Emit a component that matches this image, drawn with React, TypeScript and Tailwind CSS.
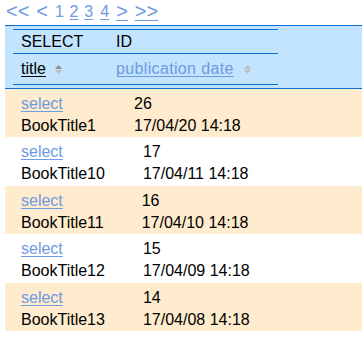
const rows = [
  { id: 26, title: 'BookTitle1', date: '17/04/20 14:18', alt: true, h: 'h-[48px]' },
  { id: 17, title: 'BookTitle10', date: '17/04/11 14:18', alt: false, h: 'h-[49px]' },
  { id: 16, title: 'BookTitle11', date: '17/04/10 14:18', alt: true, h: 'h-[48px]' },
  { id: 15, title: 'BookTitle12', date: '17/04/09 14:18', alt: false, h: 'h-[49px]' },
  { id: 14, title: 'BookTitle13', date: '17/04/08 14:18', alt: true, h: 'h-[48px]' },
]

function SortIcon({ up }: { up: string }) {
  return (
    <svg width="7" height="9" viewBox="0 0 7 9" className="shrink-0">
      <polygon points="3.5,0 7,4 0,4" fill={up} />
      <polygon points="0,5 7,5 3.5,9" fill="#bdbdbd" />
    </svg>
  )
}

const link = 'text-[#6e9ae0] underline decoration-1 underline-offset-[2px]'

export default function App() {
  return (
    <div className="min-h-[363px] bg-white font-['Liberation_Sans',Arial,sans-serif] text-[16px] text-black">
      {/* pager */}
      <div className="flex h-[25px] items-start pl-[6px] pt-[3px] leading-[18px] text-[#6e9ae0]">
        <span className="relative top-[-1px] text-[20px] leading-[18px]">&lt;&lt;</span>
        <span className="relative top-[-1px] ml-[7px] text-[20px] leading-[18px]">&lt;</span>
        <span className="ml-[7px]">1</span>
        <a className={`ml-[5.5px] ${link}`}>2</a>
        <a className={`ml-[6px] ${link}`}>3</a>
        <a className={`ml-[7px] ${link}`}>4</a>
        <a className={`relative top-[-1px] ml-[7px] text-[20px] leading-[18px] ${link}`}>&gt;</a>
        <a className={`relative top-[-1px] ml-[7px] text-[20px] leading-[18px] ${link}`}>&gt;&gt;</a>
      </div>

      {/* header */}
      <div className="ml-[5px] border-y border-[#0b6fd0] bg-[#c2e4ff] px-[8px] py-[3px]">
        <div className="w-[265px] border-t border-[#0b6fd0]">
          <div className="flex h-[24px] items-center border-b border-[#0b6fd0] pl-[8px] leading-[18px]">
            <span className="w-[95px]">SELECT</span>
            <span>ID</span>
          </div>
          <div className="flex h-[31px] items-center border-b border-[#0b6fd0] pl-[8px] leading-[18px]">
            <span className="flex w-[95px] items-center">
              <a className="text-black underline decoration-1 underline-offset-[2px]">title</a>
              <span className="ml-[9px] mt-[1px]">
                <SortIcon up="#8c8c8c" />
              </span>
            </span>
            <span className="flex items-center">
              <a className={`tracking-[0.35px] ${link}`}>publication date</a>
              <span className="ml-[10px] mt-[1px]">
                <SortIcon up="#bdbdbd" />
              </span>
            </span>
          </div>
        </div>
      </div>

      {/* rows */}
      {rows.map((r) => (
        <div key={r.id} className={`ml-[5px] ${r.h} pl-[16px] pt-[3px] ${r.alt ? 'bg-[#ffebcd]' : 'bg-white'}`}>
          <div className="inline-grid grid-cols-[auto_auto] gap-x-[38px] leading-[22px]">
            <a className={link}>select</a>
            <span>{r.id}</span>
            <span>{r.title}</span>
            <span>{r.date}</span>
          </div>
        </div>
      ))}
    </div>
  )
}
